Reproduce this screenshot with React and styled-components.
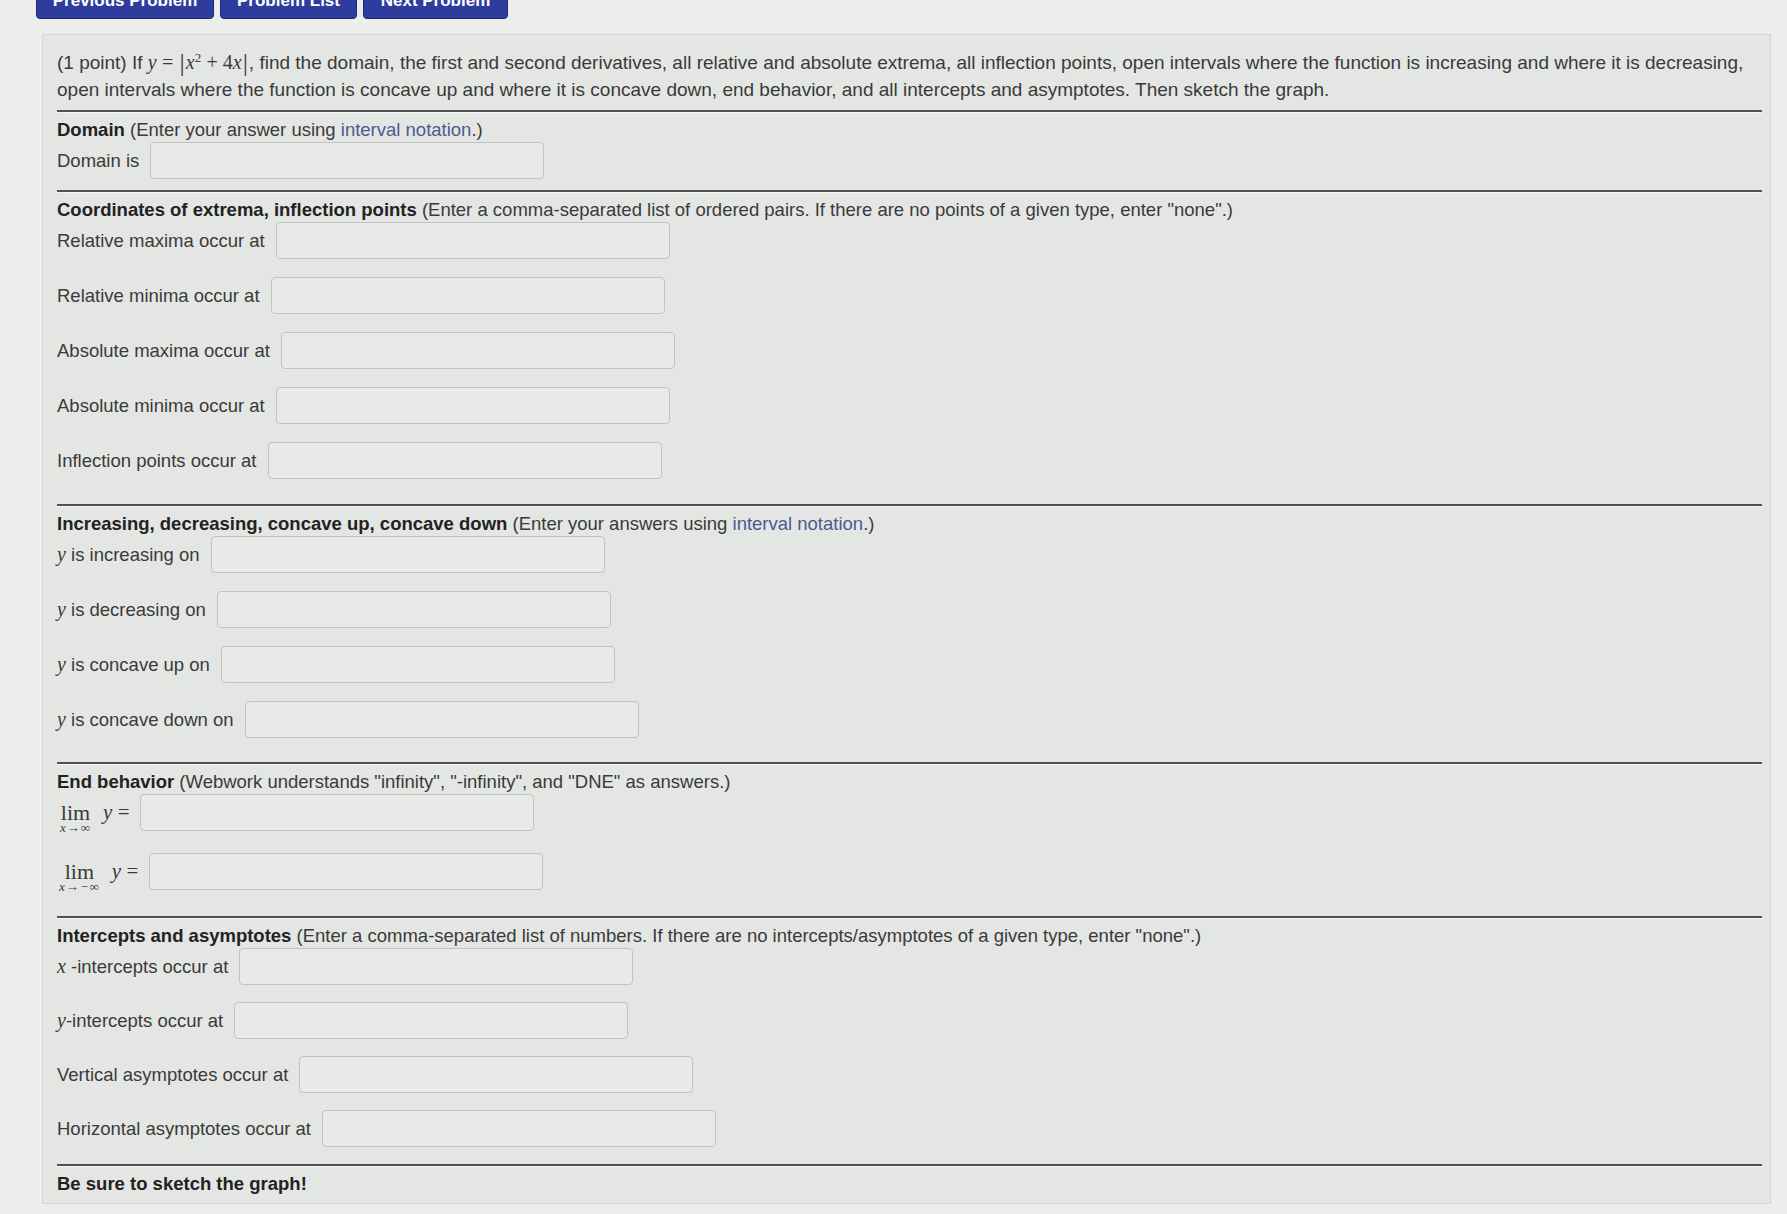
import React from "react";
import styled, { createGlobalStyle } from "styled-components";

const GlobalStyle = createGlobalStyle`
  body {
    margin: 0;
    background: #eceeec;
    font-family: "Liberation Sans", Arial, sans-serif;
    color: #3a3a3a;
    overflow: hidden;
  }
`;

const Page = styled.div`
  display: flex;
  flex-direction: column;
  padding: 0 16px 0 0;
`;

const NavBar = styled.div`
  display: flex;
  gap: 6px;
  margin: -18px 0 0 36px;
`;

const NavButton = styled.button`
  height: 37px;
  padding: 0 10px;
  background: #2d3c9d;
  border: 1px solid #1e2a78;
  border-radius: 4px;
  color: #fff;
  font-family: "Liberation Sans", Arial, sans-serif;
  font-weight: 700;
  font-size: 17px;
  white-space: nowrap;
  width: ${(p) => p.w}px;
`;

const Panel = styled.div`
  margin: 15px 0 0 42px;
  background: #e4e6e4;
  border: 1px solid #d3d5d3;
  padding: 9px 8px 3px 14px;
  font-size: 18.5px;
`;

const Intro = styled.p`
  margin: 0;
  font-size: 19px;
  line-height: 27px;
  color: #3a3a3a;
`;

const Math = styled.span`
  font-family: "Liberation Serif", "Times New Roman", serif;
  font-size: ${(p) => p.size || 20}px;
  font-style: ${(p) => (p.upright ? "normal" : "italic")};
`;

const Sup = styled.sup`
  font-family: "Liberation Serif", serif;
  font-size: 13px;
`;

const Bar = styled.span`
  font-family: "Liberation Serif", serif;
  font-size: 26px;
  font-style: normal;
  line-height: 0;
  position: relative;
  top: 2px;
  margin: 0 1px;
`;

const Rule = styled.div`
  border-top: 2px solid #4f5052;
  border-bottom: 1px solid #f6f7f6;
  margin: ${(p) => p.above}px 0 5px 0;
`;

const Heading = styled.div`
  line-height: 24px;
  color: #3a3a3a;
`;

const Strong = styled.b`
  color: #222;
  font-weight: 700;
`;

const Link = styled.span`
  color: #4b5b8e;
`;

const Rows = styled.div`
  display: flex;
  flex-direction: column;
  gap: ${(p) => p.gap || 18}px;
`;

const Row = styled.div`
  display: flex;
  align-items: center;
  gap: 11px;
  height: 37px;
`;

const Label = styled.span`
  white-space: nowrap;
  color: #3a3a3a;
`;

const AnswerBox = styled.input`
  width: 394px;
  height: 37px;
  box-sizing: border-box;
  background: #e8eae8;
  border: 1.5px solid #c2c4c2;
  border-radius: 4px;
  padding: 0 8px;
  font-size: 17px;
`;

const LimLabel = styled.span`
  display: flex;
  align-items: center;
  gap: 12px;
  height: 37px;
  margin-left: ${(p) => p.indent}px;
`;

const LimStack = styled.span`
  display: flex;
  flex-direction: column;
  align-items: center;
  height: 37px;
`;

const LimWord = styled.span`
  font-family: "Liberation Serif", serif;
  font-size: 22px;
  line-height: 37px;
`;

const LimSub = styled.span`
  font-family: "Liberation Serif", serif;
  font-style: italic;
  font-size: 13px;
  letter-spacing: 1px;
  margin-top: -11px;
  white-space: nowrap;
`;

const Footer = styled.div`
  line-height: 24px;
  padding-bottom: 4px;
`;

const Y = () => <Math>y</Math>;

function AnswerRow({ label }) {
  return (
    <Row>
      <Label>{label}</Label>
      <AnswerBox />
    </Row>
  );
}

function LimRow({ sub, indent }) {
  return (
    <Row>
      <LimLabel indent={indent}>
        <LimStack>
          <LimWord>lim</LimWord>
          <LimSub>{sub}</LimSub>
        </LimStack>
        <Math size={21}>
          y <Math upright size={21}>=</Math>
        </Math>
      </LimLabel>
      <AnswerBox />
    </Row>
  );
}

const coordinates = [
  "Relative maxima occur at",
  "Relative minima occur at",
  "Absolute maxima occur at",
  "Absolute minima occur at",
  "Inflection points occur at"
];

const monotone = [
  "is increasing on",
  "is decreasing on",
  "is concave up on",
  "is concave down on"
];

export default function App() {
  return (
    <Page>
      <GlobalStyle />
      <NavBar>
        <NavButton w={178}>Previous Problem</NavButton>
        <NavButton w={137}>Problem List</NavButton>
        <NavButton w={145}>Next Problem</NavButton>
      </NavBar>
      <Panel>
        <Intro>
          (1 point) If <Math>y</Math> <Math upright>=</Math> <Bar>|</Bar>
          <Math>x</Math>
          <Sup>2</Sup> <Math upright>+ 4</Math>
          <Math>x</Math>
          <Bar>|</Bar>, find the domain, the first and second derivatives, all
          relative and absolute extrema, all inflection points, open intervals
          where the function is increasing and where it is decreasing, open
          intervals where the function is concave up and where it is concave
          down, end behavior, and all intercepts and asymptotes. Then sketch the
          graph.
        </Intro>

        <Rule above={7} />
        <Heading>
          <Strong>Domain</Strong> (Enter your answer using{" "}
          <Link>interval notation</Link>.)
        </Heading>
        <AnswerRow label="Domain is" />

        <Rule above={11} />
        <Heading>
          <Strong>Coordinates of extrema, inflection points</Strong> (Enter a
          comma-separated list of ordered pairs. If there are no points of a
          given type, enter "none".)
        </Heading>
        <Rows>
          {coordinates.map((c) => (
            <AnswerRow key={c} label={c} />
          ))}
        </Rows>

        <Rule above={25} />
        <Heading>
          <Strong>Increasing, decreasing, concave up, concave down</Strong>{" "}
          (Enter your answers using <Link>interval notation</Link>.)
        </Heading>
        <Rows gap={18}>
          {monotone.map((m) => (
            <AnswerRow
              key={m}
              label={
                <>
                  <Y /> {m}
                </>
              }
            />
          ))}
        </Rows>

        <Rule above={24} />
        <Heading>
          <Strong>End behavior</Strong> (Webwork understands "infinity",
          "-infinity", and "DNE" as answers.)
        </Heading>
        <Rows gap={22}>
          <LimRow sub="x→∞" indent={3} />
          <LimRow sub="x→−∞" indent={2} />
        </Rows>

        <Rule above={26} />
        <Heading>
          <Strong>Intercepts and asymptotes</Strong> (Enter a comma-separated
          list of numbers. If there are no intercepts/asymptotes of a given
          type, enter "none".)
        </Heading>
        <Rows gap={17}>
          <AnswerRow
            label={
              <>
                <Math>x</Math> -intercepts occur at
              </>
            }
          />
          <AnswerRow
            label={
              <>
                <Y />
                -intercepts occur at
              </>
            }
          />
          <AnswerRow label="Vertical asymptotes occur at" />
          <AnswerRow label="Horizontal asymptotes occur at" />
        </Rows>

        <Rule above={17} />
        <Footer>
          <Strong>Be sure to sketch the graph!</Strong>
        </Footer>
      </Panel>
    </Page>
  );
}
